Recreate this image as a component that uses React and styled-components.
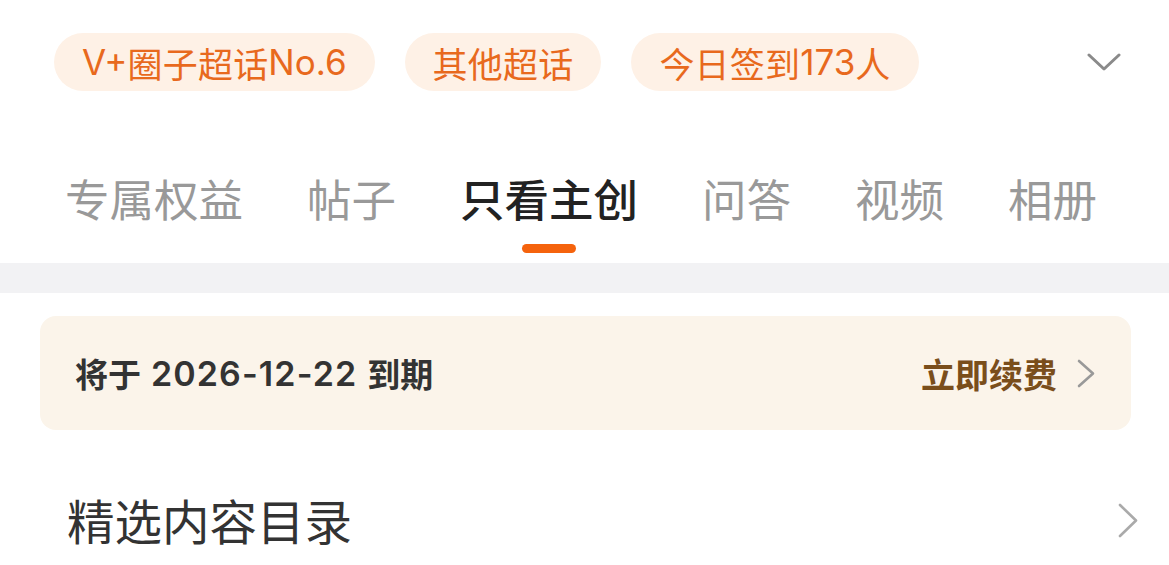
import React from 'react';
import styled, { createGlobalStyle } from 'styled-components';

const GlobalStyle = createGlobalStyle`
  html, body {
    margin: 0;
    padding: 0;
    background: #ffffff;
  }
  body {
    font-family: "Noto Sans CJK SC", "Noto Sans", sans-serif;
  }
`;

const Page = styled.div`
  width: 1169px;
  height: 565px;
  overflow: hidden;
  background: #ffffff;
`;

const TopBar = styled.div`
  display: flex;
  align-items: center;
  gap: 30px;
  padding: 33px 48px 0 54px;
`;

const Pill = styled.div`
  height: 58px;
  display: flex;
  align-items: center;
  padding: 0 28px;
  border-radius: 29px;
  background: #fef1e6;
  color: #e8691d;
  font-size: 35px;
  letter-spacing: 0.2px;
  line-height: 1;
  white-space: nowrap;
`;

const Latin = styled.span`
  font-family: "Inter", "Noto Sans", sans-serif;
  letter-spacing: 0;
`;

const MoreButton = styled.div`
  margin-left: auto;
  display: flex;
  align-items: center;
  color: #8a8a8a;
`;

const Tabs = styled.div`
  display: flex;
  gap: 64px;
  padding: 0 0 0 65px;
  margin-top: 77px;
`;

const Tab = styled.div`
  display: flex;
  flex-direction: column;
  align-items: center;
  font-size: 44.5px;
  line-height: 60px;
  color: ${p => (p.$active ? '#222222' : '#999999')};
  font-weight: ${p => (p.$active ? 500 : 400)};
  white-space: nowrap;
`;

const Indicator = styled.div`
  width: 54px;
  height: 9px;
  border-radius: 5px;
  margin-top: 16px;
  background: ${p => (p.$show ? '#f5630d' : 'transparent')};
`;

const Band = styled.div`
  height: 30px;
  margin-top: 10px;
  background: #f2f2f4;
`;

const RenewCard = styled.div`
  margin: 23px 38px 0 40px;
  height: 114px;
  border-radius: 16px;
  background: #fbf4ea;
  display: flex;
  align-items: center;
  justify-content: space-between;
  padding: 0 36px 0 35px;
  box-sizing: border-box;
`;

const Expire = styled.div`
  font-size: 33px;
  font-weight: 600;
  color: #333333;
  display: flex;
  align-items: center;
  gap: 10px;
`;

const DateText = styled.span`
  font-family: "Inter", "Noto Sans", sans-serif;
  font-size: 34px;
  font-weight: 600;
  letter-spacing: 1.1px;
`;

const RenewLink = styled.div`
  display: flex;
  align-items: center;
  gap: 20px;
  font-size: 34px;
  font-weight: 600;
  color: #7a4e1b;
`;

const CatalogRow = styled.div`
  display: flex;
  align-items: center;
  justify-content: space-between;
  margin-top: 60px;
  padding: 0 31px 0 67px;
  height: 60px;
`;

const CatalogTitle = styled.div`
  font-size: 47.5px;
  line-height: 60px;
  color: #333333;
`;

const ChevronDown = () => (
  <svg width="34" height="20" viewBox="0 0 34 20">
    <polyline points="2,3 17,17 32,3" fill="none" stroke="#8a8a8a" strokeWidth="3" strokeLinecap="round" strokeLinejoin="round" />
  </svg>
);

const ChevronRight = ({ w, h, color }) => (
  <svg width={w} height={h} viewBox={`0 0 ${w} ${h}`}>
    <polyline points={`2,2 ${w - 2},${h / 2} 2,${h - 2}`} fill="none" stroke={color} strokeWidth="2.6" strokeLinecap="round" strokeLinejoin="round" />
  </svg>
);

const tabs = ['专属权益', '帖子', '只看主创', '问答', '视频', '相册'];

export default function App() {
  return (
    <Page>
      <GlobalStyle />
      <TopBar>
        <Pill>
          <Latin>V+</Latin>圈子超话<Latin>No.6</Latin>
        </Pill>
        <Pill>其他超话</Pill>
        <Pill>
          今日签到<Latin>173</Latin>人
        </Pill>
        <MoreButton>
          <ChevronDown />
        </MoreButton>
      </TopBar>
      <Tabs>
        {tabs.map(t => (
          <Tab key={t} $active={t === '只看主创'}>
            {t}
            <Indicator $show={t === '只看主创'} />
          </Tab>
        ))}
      </Tabs>
      <Band />
      <RenewCard>
        <Expire>
          <span>将于</span>
          <DateText>2026-12-22</DateText>
          <span>到期</span>
        </Expire>
        <RenewLink>
          立即续费
          <ChevronRight w={18} h={29} color="#999999" />
        </RenewLink>
      </RenewCard>
      <CatalogRow>
        <CatalogTitle>精选内容目录</CatalogTitle>
        <ChevronRight w={20} h={35} color="#aaaaaa" />
      </CatalogRow>
    </Page>
  );
}
